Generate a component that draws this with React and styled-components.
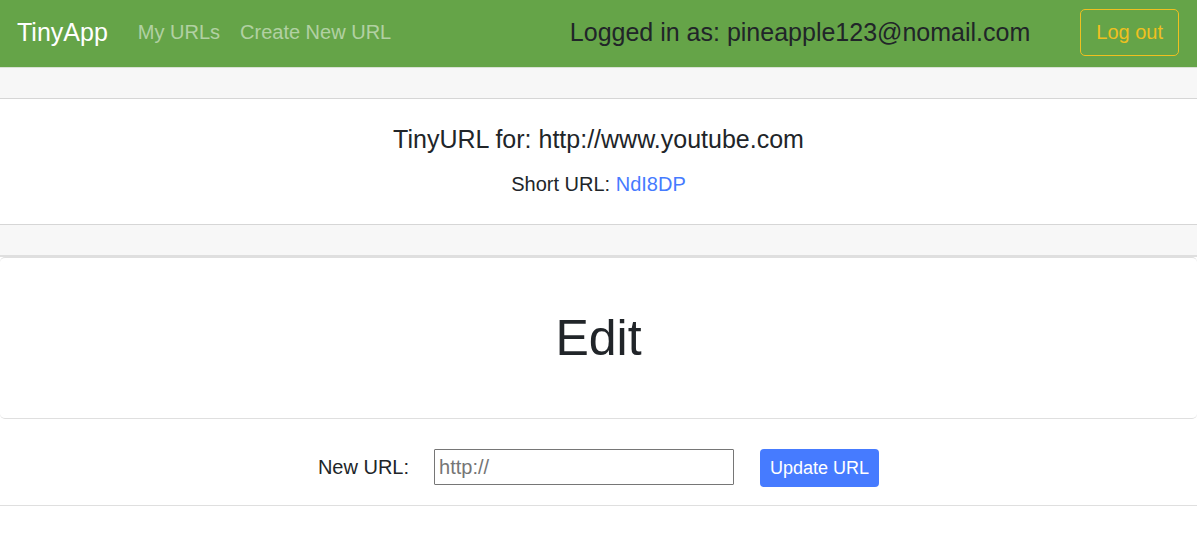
import React from "react";
import styled, { createGlobalStyle } from "styled-components";

const GlobalStyle = createGlobalStyle`
  *, *::before, *::after { box-sizing: border-box; }
  body {
    margin: 0;
    background: #fff;
    color: #212529;
    font-family: "Liberation Sans", Arial, sans-serif;
    font-size: 20px;
    line-height: 30px;
  }
`;

const Navbar = styled.header`
  display: flex;
  align-items: flex-start;
  padding: 9px 18px 11px 17px;
  border-bottom: 1px solid #d9e2d4;
  background: #65a448;
  background-clip: padding-box;
`;

const Brand = styled.a`
  margin-right: 20px;
  padding: 8px 0;
  color: #fff;
  font-size: 25px;
  text-decoration: none;
`;

const NavLinks = styled.nav`
  display: flex;
  flex: 1;
`;

const NavLink = styled.a`
  padding: 8px 10px;
  color: rgba(255, 255, 255, 0.5);
  text-decoration: none;
`;

const Account = styled.form`
  display: flex;
  align-items: flex-start;
  gap: 50px;
`;

const UserLabel = styled.span`
  padding: 8px 0;
  font-size: 25px;
`;

const LogoutButton = styled.button`
  padding: 7px 15px 8px;
  border: 1px solid #efc020;
  border-radius: 5px;
  background: transparent;
  color: #efc020;
  font: inherit;
`;

const Band = styled.div`
  padding: 15px 0;
  background: #f7f7f7;
  border-bottom: ${(p) => (p.$thick ? "2px solid #dfdfdf" : "1px solid #d6d6d6")};
`;

const Summary = styled.section`
  padding: 25px;
  border-bottom: 1px solid #d6d6d6;
  text-align: center;
`;

const SummaryTitle = styled.h5`
  margin: 0 0 15px;
  font-size: 25px;
  font-weight: 400;
`;

const SummaryText = styled.p`
  margin: 0;
`;

const ShortLink = styled.a`
  color: #467bff;
  text-decoration: none;
`;

const EditCard = styled.section`
  padding: 50px 20px;
  border: solid #dfdfdf;
  border-width: 1px 0;
  border-radius: 5px;
  text-align: center;
`;

const EditTitle = styled.h1`
  margin: 0;
  font-size: 50px;
  font-weight: 400;
  line-height: 60px;
`;

const UpdateForm = styled.form`
  display: flex;
  justify-content: center;
  align-items: flex-start;
  padding: 30px 0 18px;
  border-bottom: 1px solid #dfdfdf;
`;

const UrlLabel = styled.label`
  margin-right: 25px;
  line-height: 36px;
`;

const UrlInput = styled.input`
  width: 300px;
  height: 36px;
  margin-right: 26px;
  padding: 1px 4px;
  border: 1px solid #767676;
  border-radius: 1px;
  font: inherit;
`;

const UpdateButton = styled.button`
  padding: 4px 10px;
  border: 0;
  border-radius: 4px;
  background: #467bff;
  color: #fff;
  font: inherit;
  font-size: 18px;
`;

export default function App() {
  return (
    <>
      <GlobalStyle />
      <Navbar>
        <Brand href="#">TinyApp</Brand>
        <NavLinks>
          <NavLink href="#urls">My URLs</NavLink>
          <NavLink href="#new">Create New URL</NavLink>
        </NavLinks>
        <Account>
          <UserLabel>Logged in as: pineapple123@nomail.com</UserLabel>
          <LogoutButton type="button">Log out</LogoutButton>
        </Account>
      </Navbar>
      <main>
        <Band />
        <Summary>
          <SummaryTitle>TinyURL for: http://www.youtube.com</SummaryTitle>
          <SummaryText>
            Short URL: <ShortLink href="#short">NdI8DP</ShortLink>
          </SummaryText>
        </Summary>
        <Band $thick />
        <EditCard>
          <EditTitle>Edit</EditTitle>
        </EditCard>
        <UpdateForm>
          <UrlLabel htmlFor="new-url">New URL:</UrlLabel>
          <UrlInput id="new-url" type="text" placeholder="http://" />
          <UpdateButton type="button">Update URL</UpdateButton>
        </UpdateForm>
      </main>
    </>
  );
}
